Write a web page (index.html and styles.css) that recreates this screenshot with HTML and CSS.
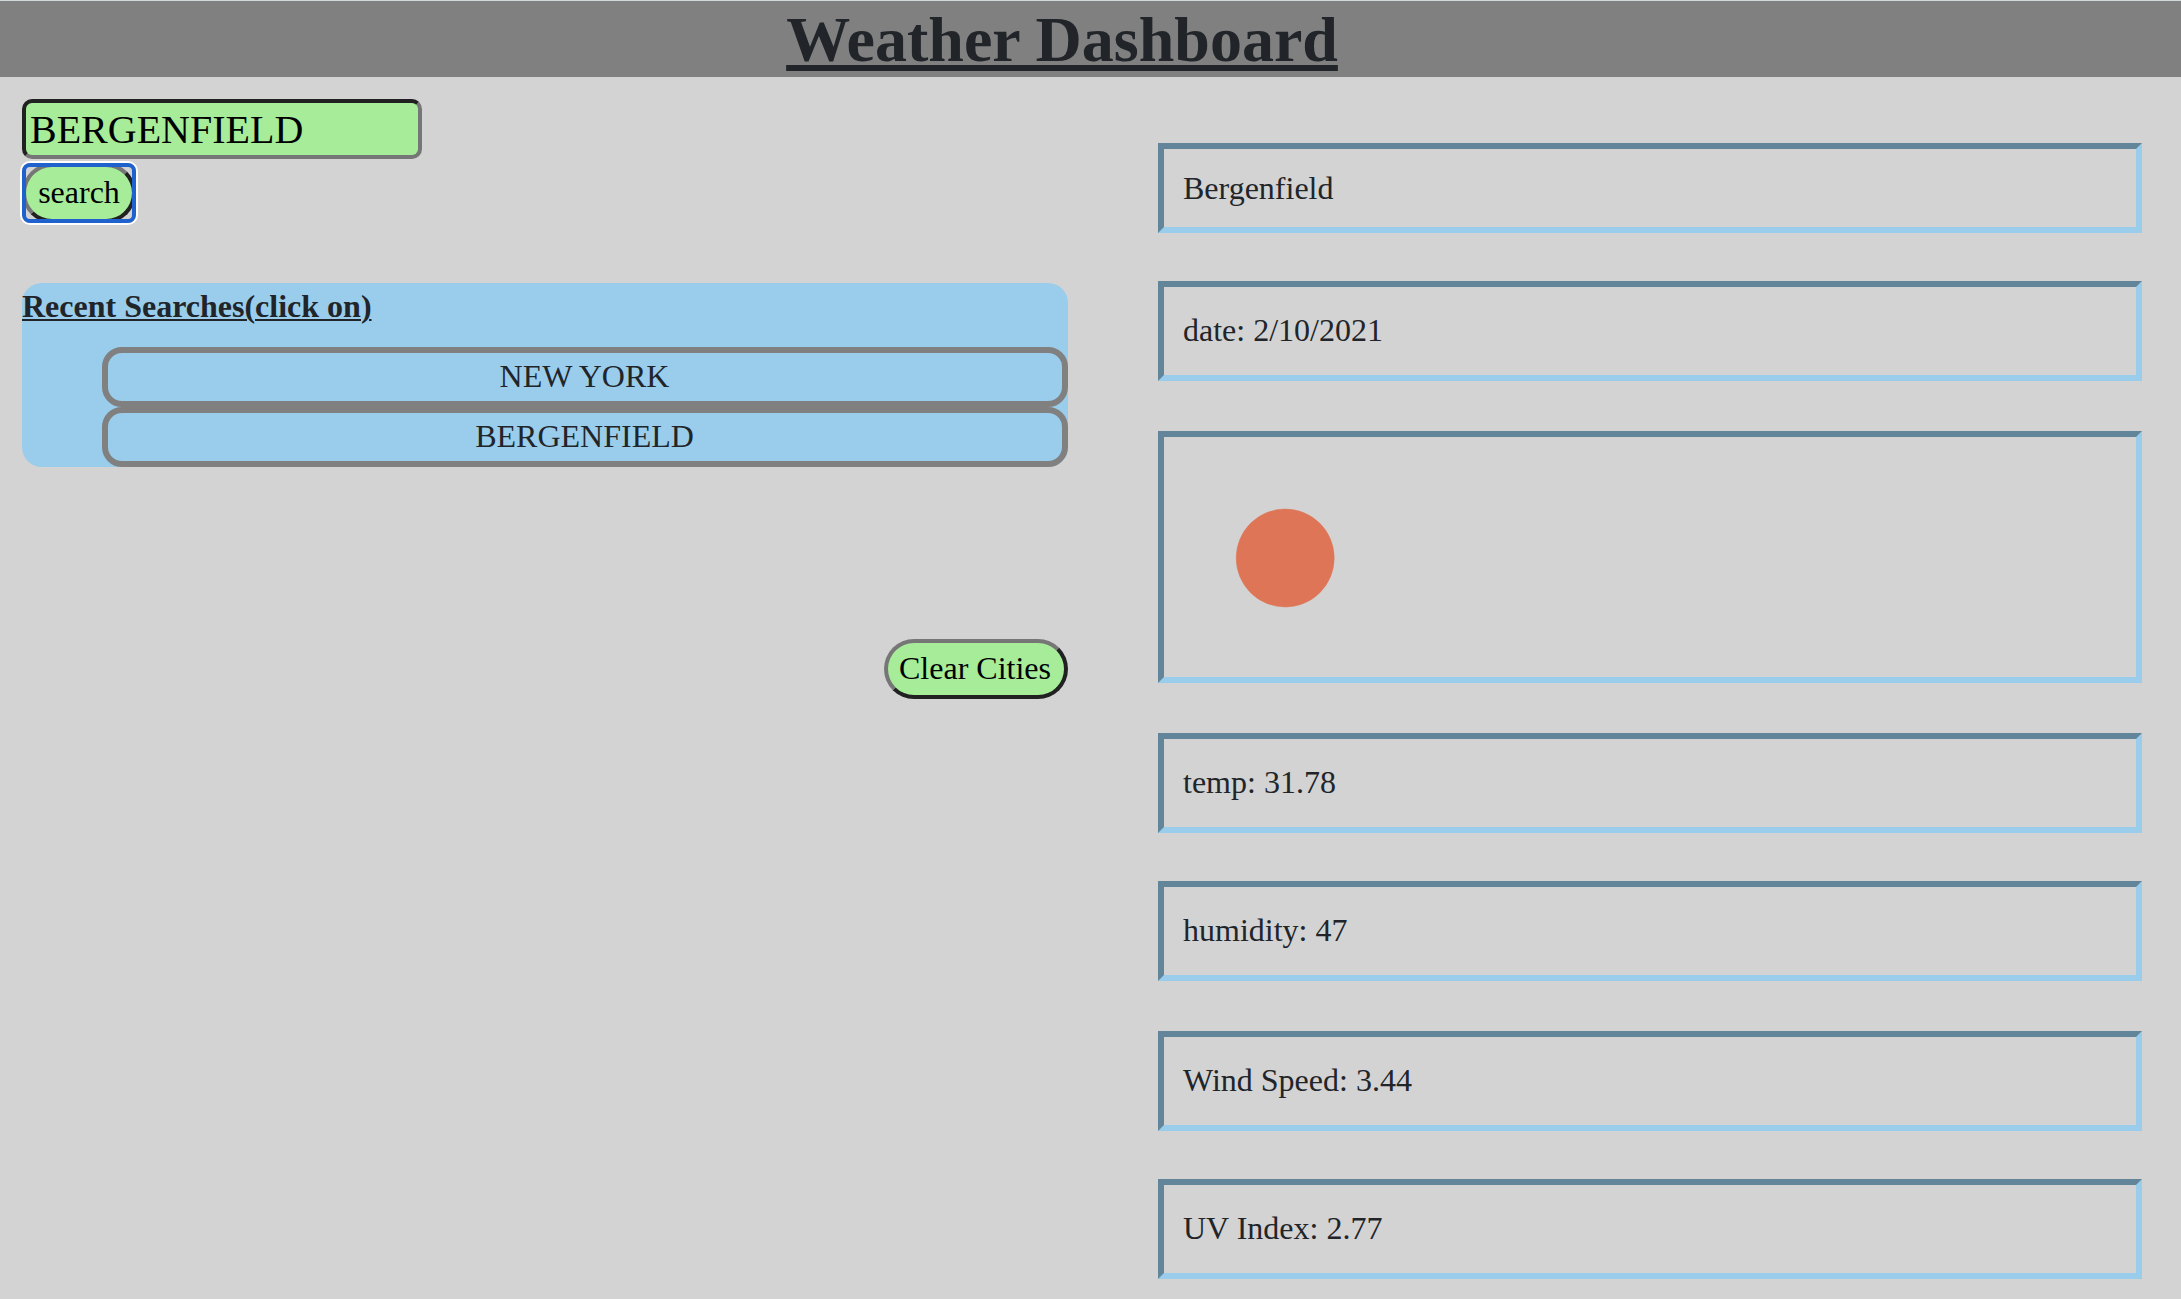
FILE: index.html
```html
<!DOCTYPE html>
<html lang="en">
<head>
<meta charset="utf-8">
<title>Weather Dashboard</title>
<link rel="stylesheet" href="styles.css">
</head>
<body>
<header class="header"><h1 class="title">Weather Dashboard</h1></header>
<main class="main">
  <section class="sidebar">
    <input class="city-input" type="text" value="BERGENFIELD" aria-label="City">
    <button class="btn btn-search" type="button">search</button>
    <div class="recent">
      <h2 class="recent-title">Recent Searches(click on)</h2>
      <ul class="recent-list">
        <li class="recent-item">NEW YORK</li>
        <li class="recent-item">BERGENFIELD</li>
      </ul>
    </div>
    <button class="btn btn-clear" type="button">Clear Cities</button>
  </section>
  <section class="weather">
    <div class="card card-city">Bergenfield</div>
    <div class="card card-date">date: 2/10/2021</div>
    <div class="card card-icon"><svg class="sun" viewBox="0 0 200 200" role="img" aria-label="clear sky"><circle cx="100.2" cy="100" r="49" fill="#de7556" stroke="#de7556" stroke-opacity=".5"/></svg></div>
    <div class="card card-temp">temp: 31.78</div>
    <div class="card card-humidity">humidity: 47</div>
    <div class="card card-wind">Wind Speed: 3.44</div>
    <div class="card card-uv">UV Index: 2.77</div>
  </section>
</main>
</body>
</html>
```
FILE: styles.css
```css
* {
  box-sizing: border-box;
}

body {
  margin: 0;
  height: 1299px;
  overflow: hidden;
  background: #d3d3d3;
  color: #212529;
  font: 32px/48px "Liberation Serif", "Times New Roman", serif;
}

.header {
  height: 77px;
  border-top: 1px solid #d3d8da;
  background: #808080;
}

.title {
  margin: 0;
  padding-right: 57px;
  font-size: 64px;
  line-height: 77px;
  text-align: center;
  text-decoration: underline;
  text-decoration-thickness: 6px;
  text-underline-offset: 4px;
  text-decoration-skip-ink: none;
}

.main {
  display: grid;
  grid-template-columns: 1046px 984px;
  column-gap: 90px;
  padding-left: 22px;
}

.sidebar {
  display: flex;
  flex-direction: column;
  align-items: flex-start;
  padding-top: 22px;
}

.city-input {
  width: 400px;
  height: 60px;
  margin: 0;
  padding: 2px 4px;
  border: 4px solid;
  border-color: #212121 #767676 #767676 #212121;
  border-radius: 10px;
  background: #a6ec99;
  color: #000;
  font: 40px "Liberation Serif", "Times New Roman", serif;
  outline: none;
}

.btn {
  height: 60px;
  padding: 0 0 2px;
  border: 4px solid;
  border-color: #767676 #212121 #212121 #767676;
  border-radius: 30px;
  background: #a6ec99;
  color: #000;
  font: 32px/48px "Liberation Serif", "Times New Roman", serif;
}

.btn-search {
  position: relative;
  width: 114px;
  margin-top: 4px;
}

/* Focus ring drawn over the pill's own border */
.btn-search::after {
  content: "";
  position: absolute;
  inset: -4px;
  border: 4px solid #1f62cd;
  border-radius: 8px;
  box-shadow: 0 0 0 2px #fff;
}

.recent {
  width: 100%;
  margin-top: 60px;
  border-radius: 20px;
  background: #99cdeb;
}

.recent-title {
  margin: 0;
  height: 64px;
  font-size: 32px;
  line-height: 46px;
  text-decoration: underline;
  text-decoration-thickness: 2px;
  text-underline-offset: 2px;
}

.recent-list {
  margin: 0;
  padding: 0 0 0 80px;
  list-style: none;
}

.recent-item {
  height: 60px;
  padding-right: 1px;
  border: 6px solid #808080;
  border-radius: 20px;
  line-height: 46px;
  text-align: center;
}

.btn-clear {
  align-self: flex-end;
  width: 184px;
  margin-top: 172px;
  padding-right: 2px;
}

.weather {
  padding-top: 66px;
}

.card {
  height: 100px;
  margin-bottom: 48px;
  padding: 19px 19px 0;
  border: 6px solid;
  border-color: #638599 #99cdeb #99cdeb #638599;
}

.card-city {
  height: 90px;
  padding-top: 15px;
}

.card-date,
.card-icon,
.card-humidity {
  margin-bottom: 50px;
}

.card-icon {
  height: 252px;
  padding: 21px 21px 0;
}

.sun {
  display: block;
  width: 200px;
  height: 200px;
}
```
